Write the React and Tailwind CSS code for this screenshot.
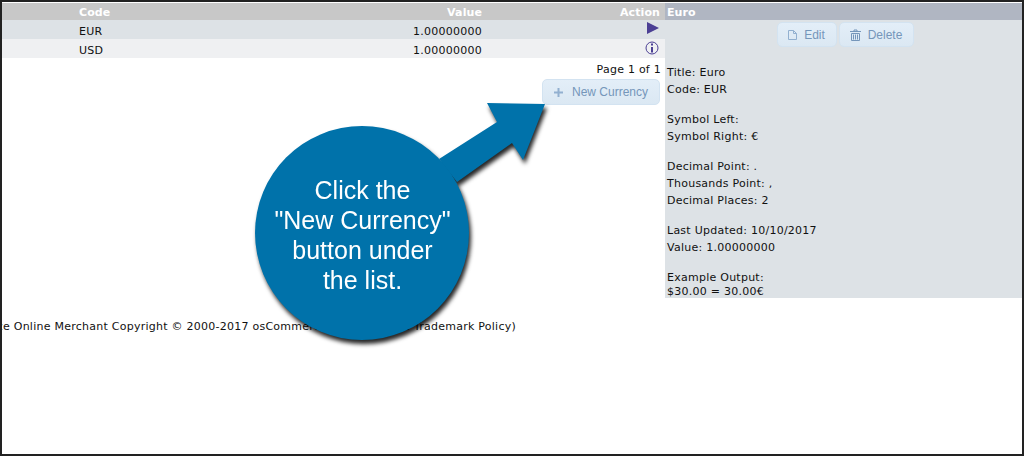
const verdana = "font-['DejaVu_Sans',Verdana,sans-serif]";

function ActionButton({ icon, label, gap, className }) {
  return (
    <div
      className={`flex items-center justify-center rounded-[5px] border border-[#d3e3f1] bg-gradient-to-b from-[#e3eef8] to-[#dbe8f3] font-['Liberation_Sans',Arial,sans-serif] text-[12px] tracking-normal text-[#7596ba] ${gap} ${className}`}
    >
      {icon}
      <span>{label}</span>
    </div>
  );
}

const PageIcon = () => (
  <svg width="9" height="10" viewBox="0 0 9 10" fill="none" stroke="#92b0d0" strokeWidth="1">
    <path d="M.5.5h5l3 3v6h-8z" />
    <path d="M5.5.5v3h3" />
  </svg>
);

const TrashIcon = () => (
  <svg width="11" height="12" viewBox="0 0 11 12" fill="none" stroke="#7596ba" strokeWidth="1">
    <path d="M0 2.5h11M4 2.5V1h3v1.5" />
    <path d="M1.5 4.5h8v7h-8zM3.5 5.5v5M5.5 5.5v5M7.5 5.5v5" />
  </svg>
);

const PlusIcon = () => (
  <svg width="9" height="9" viewBox="0 0 9 9" fill="none" stroke="#92b0d0" strokeWidth="2">
    <path d="M4.5 0v9M0 4.5h9" />
  </svg>
);

const PlayIcon = () => (
  <svg width="12" height="12" viewBox="0 0 12 12">
    <path d="M0 0l12 6-12 6z" fill="#4b3f94" />
  </svg>
);

const InfoIcon = () => (
  <svg width="14" height="14" viewBox="0 0 14 14" fill="none" stroke="#4b3f94">
    <circle cx="7" cy="7" r="6" />
    <path d="M7 6v5.5" strokeWidth="2" />
    <path d="M6 2.5h2v2H6z" fill="#4b3f94" stroke="none" />
  </svg>
);

function CurrencyRow({ code, icon, className }) {
  return (
    <div className={`grid h-[19px] grid-cols-[77px_403px_1fr] pt-[3px] pr-[6px] leading-[17px] ${className}`}>
      <span />
      <div className="flex justify-between">
        <span>{code}</span>
        <span>1.00000000</span>
      </div>
      <div className="-mt-[1px] flex items-start justify-end">{icon}</div>
    </div>
  );
}

function InfoBlock({ lines, className }) {
  return (
    <div className={className}>
      {lines.map((line) => (
        <div key={line} className="h-[17px] leading-[17px]">
          {line}
        </div>
      ))}
    </div>
  );
}

export default function App() {
  return (
    <div className={`relative h-[456px] w-[1024px] overflow-hidden border-2 border-[#222] bg-white text-[11px] tracking-[0.25px] text-[#111] ${verdana}`}>
      <div className="flex pt-px">
        <div className="w-[663px]">
          <div className="grid h-[17px] grid-cols-[77px_403px_1fr] bg-[#c8c8c8] pt-px pr-[5px] font-bold leading-[17px] tracking-[0.1px] text-white">
            <span />
            <div className="flex justify-between">
              <span>Code</span>
              <span>Value</span>
            </div>
            <span className="text-right">Action</span>
          </div>
          <CurrencyRow code="EUR" icon={<PlayIcon />} className="bg-[#dde2e6]" />
          <CurrencyRow code="USD" icon={<InfoIcon />} className="bg-[#eff0f2]" />
          <div className="mt-[3px] pr-[4px] text-right leading-[17px]">Page 1 of 1</div>
          <div className="mt-[1px] flex justify-end pr-[5px]">
            <ActionButton icon={<PlusIcon />} label="New Currency" gap="gap-[9px]" className="h-[26px] w-[118px]" />
          </div>
        </div>

        <div className="h-[295px] flex-1 bg-[#dde2e6]">
          <div className="h-[17px] bg-[#b0b6c2] pt-px pl-[2px] font-bold leading-[17px] tracking-[0.1px] text-white">Euro</div>
          <div className="mt-[2px] flex justify-center gap-[2px] pl-[3px]">
            <ActionButton icon={<PageIcon />} label="Edit" gap="gap-[7px]" className="h-[25px] w-[60px]" />
            <ActionButton icon={<TrashIcon />} label="Delete" gap="gap-[7px]" className="h-[25px] w-[75px]" />
          </div>
          <div className="px-[2px] pt-[17px]">
            <InfoBlock lines={["Title: Euro", "Code: EUR"]} />
            <InfoBlock lines={["Symbol Left:", "Symbol Right: €"]} className="mt-[13px]" />
            <InfoBlock
              lines={["Decimal Point: .", "Thousands Point: ,", "Decimal Places: 2"]}
              className="mt-[13px]"
            />
            <InfoBlock lines={["Last Updated: 10/10/2017", "Value: 1.00000000"]} className="mt-[13px]" />
            <div className="mt-[15px] leading-[14px]">
              <div>Example Output:</div>
              <div>$30.00 = 30.00€</div>
            </div>
          </div>
        </div>
      </div>

      <div className="mt-[20px] flex w-[514px] justify-end overflow-hidden whitespace-nowrap leading-[17px]">
        osCommerce Online Merchant Copyright © 2000-2017 osCommerce (osCommerce Trademark Policy)
      </div>

      {/* callout sits on top of the page */}
      <div className="absolute top-[-2px] left-[-2px] h-[456px] w-[1024px] tracking-normal drop-shadow-[2px_4px_2px_rgba(0,0,0,0.85)]">
        <svg className="absolute top-0 left-0" width="1024" height="456" viewBox="0 0 1024 456">
          <path d="M439 159L497 122L487 103L545 104L523 160L512 143L457 182Z" fill="#0072aa" />
        </svg>
        <div className="absolute top-[126px] left-[255px] flex h-[214px] w-[214px] items-center justify-center rounded-full bg-[#0072aa] pt-[3px] pl-px text-center font-['Liberation_Sans',Arial,sans-serif] text-[25px] leading-[30px] text-white">
          <div>
            Click the
            <br />
            "New Currency"
            <br />
            button under
            <br />
            the list.
          </div>
        </div>
      </div>
    </div>
  );
}
